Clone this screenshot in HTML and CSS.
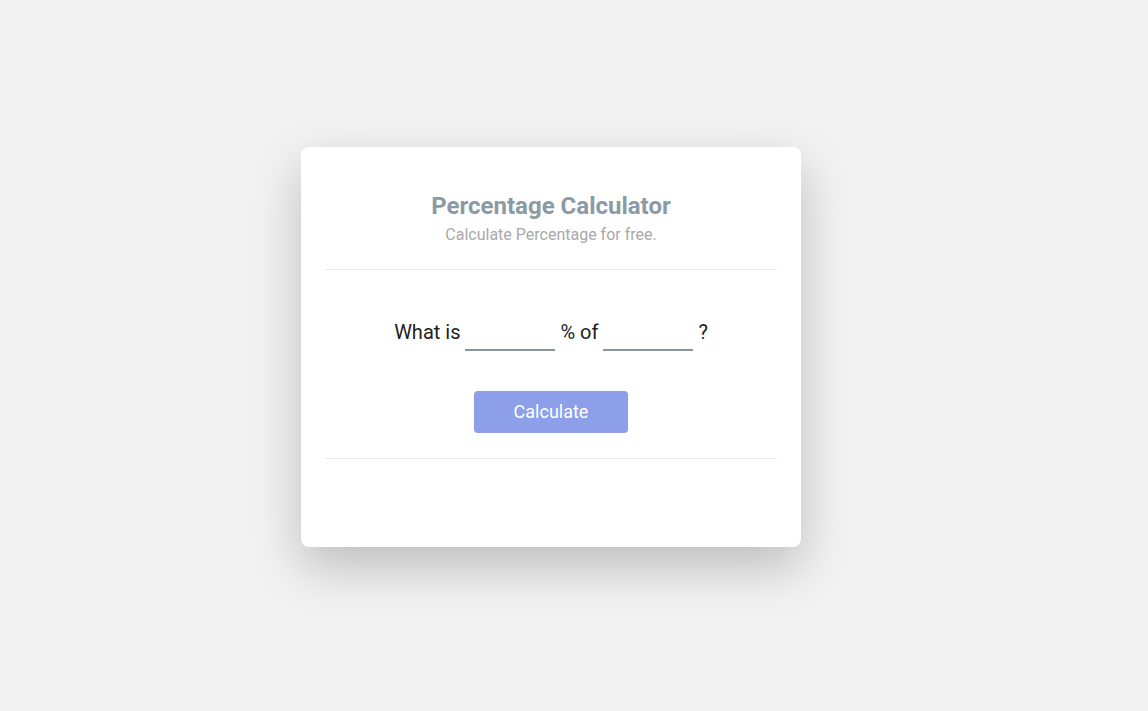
FILE: index.html
```html
<!DOCTYPE html>
<html>
<head>
<meta charset="utf-8">
<link rel="stylesheet" href="styles.css">
</head>
<body>
<div class="card">
  <div class="header">
    <h1 class="title">Percentage Calculator</h1>
    <p class="subtitle">Calculate Percentage for free.</p>
  </div>
  <div class="body">
    <div class="question">
      <span>What is</span>
      <input class="field" type="text">
      <span>% of</span>
      <input class="field" type="text">
      <span>?</span>
    </div>
    <button class="btn">Calculate</button>
  </div>
  <div class="footer"></div>
</div>
</body>
</html>
```
FILE: styles.css
```css
html, body { margin: 0; padding: 0; }
body {
  background: #f2f2f2;
  width: 1148px;
  height: 711px;
  box-sizing: border-box;
  padding: 147px 0 0 301px;
  font-family: Roboto, "Liberation Sans", sans-serif;
}
.card {
  box-sizing: border-box;
  width: 500px;
  height: 400px;
  background: #fff;
  border-radius: 8px;
  box-shadow: 0 20px 50px rgba(0,0,0,0.22);
  padding: 0 24px 0 24px;
  display: flex;
  flex-direction: column;
}
.header {
  padding-top: 45px;
  padding-bottom: 24px;
  border-bottom: 1px solid #e8e8e8;
  text-align: center;
}
.title {
  margin: 0;
  font-size: 24px;
  font-weight: 700;
  color: #8a9ba6;
  line-height: 28px;
}
.subtitle {
  margin: 5px 0 0;
  font-size: 16px;
  color: #a9a9a9;
  line-height: 20px;
}
.body {
  padding: 46px 0 25px;
  border-bottom: 1px solid #e8e8e8;
  display: flex;
  flex-direction: column;
  align-items: center;
}
.question {
  display: flex;
  align-items: flex-end;
  gap: 5px;
  font-size: 20px;
  color: #222;
  height: 35px;
}
.question span { line-height: 24px; padding-bottom: 7px; }
.field {
  width: 90px;
  height: 32px;
  box-sizing: border-box;
  border: none;
  border-bottom: 2px solid #8795a1;
  outline: none;
  background: transparent;
  font-family: inherit;
  font-size: 18px;
  padding: 0;
}
.btn {
  margin-top: 40px;
  width: 154px;
  height: 42px;
  border: none;
  border-radius: 4px;
  background: #8c9fe8;
  color: #fff;
  font-family: inherit;
  font-size: 18px;
  line-height: 20px;
  padding: 0 0 1px;
}
```
